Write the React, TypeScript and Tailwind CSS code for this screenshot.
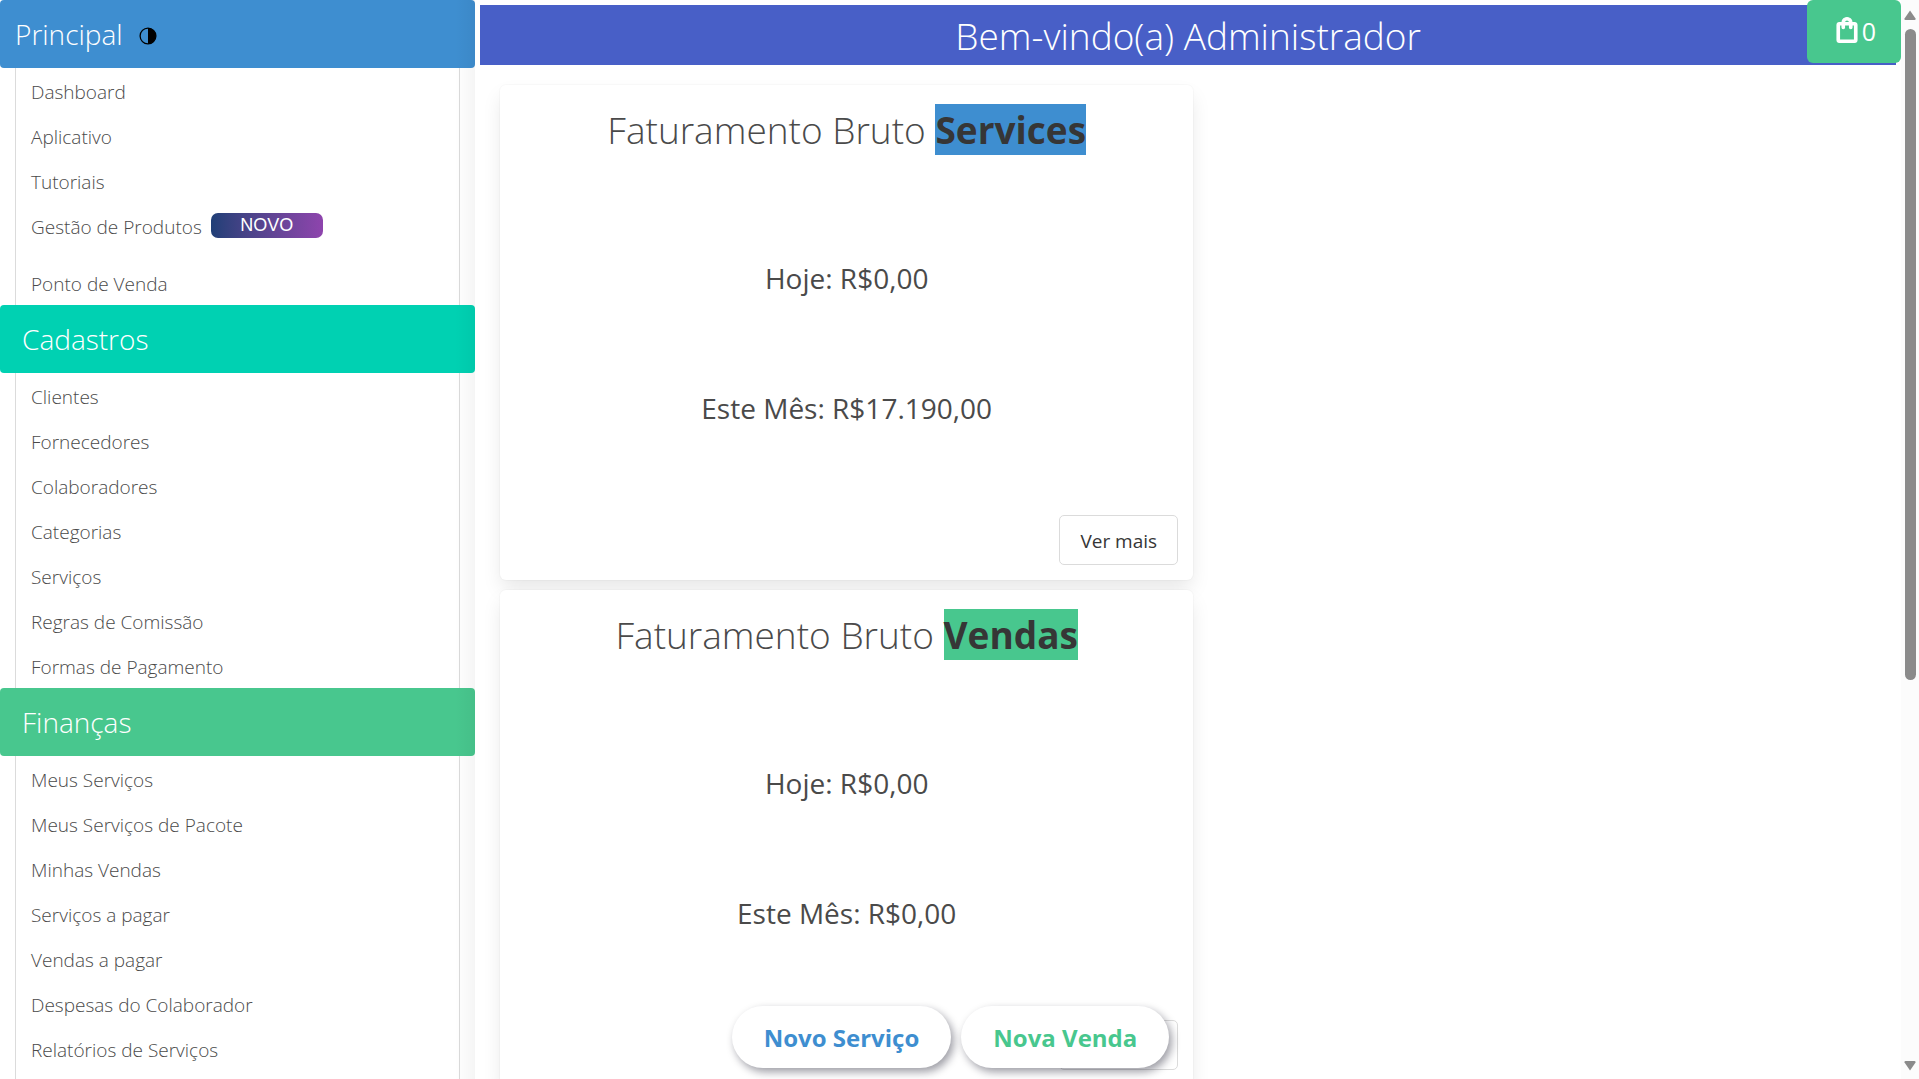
import { useState } from 'react';
import clsx from 'clsx';

interface MenuItem {
  label: string;
  isNew?: boolean;
}

interface MenuSection {
  title: string;
  color: string;
  hasThemeToggle?: boolean;
  items: MenuItem[];
}

interface Revenue {
  name: string;
  highlight: string;
  today: string;
  month: string;
}

const sections: MenuSection[] = [
  {
    title: 'Principal',
    color: 'bg-[#3e8ed0]',
    hasThemeToggle: true,
    items: [
      { label: 'Dashboard' },
      { label: 'Aplicativo' },
      { label: 'Tutoriais' },
      { label: 'Gestão de Produtos', isNew: true },
      { label: 'Ponto de Venda' },
    ],
  },
  {
    title: 'Cadastros',
    color: 'bg-[#00d1b2]',
    items: [
      { label: 'Clientes' },
      { label: 'Fornecedores' },
      { label: 'Colaboradores' },
      { label: 'Categorias' },
      { label: 'Serviços' },
      { label: 'Regras de Comissão' },
      { label: 'Formas de Pagamento' },
    ],
  },
  {
    title: 'Finanças',
    color: 'bg-[#48c78e]',
    items: [
      { label: 'Meus Serviços' },
      { label: 'Meus Serviços de Pacote' },
      { label: 'Minhas Vendas' },
      { label: 'Serviços a pagar' },
      { label: 'Vendas a pagar' },
      { label: 'Despesas do Colaborador' },
      { label: 'Relatórios de Serviços' },
    ],
  },
];

const revenues: Revenue[] = [
  { name: 'Services', highlight: 'bg-[#3e8ed0]', today: 'R$0,00', month: 'R$17.190,00' },
  { name: 'Vendas', highlight: 'bg-[#48c78e]', today: 'R$0,00', month: 'R$0,00' },
];

function ContrastIcon() {
  return (
    <svg viewBox="0 0 18 18" className="size-[18px]" aria-hidden="true">
      <circle cx="9" cy="9" r="7.9" fill="none" stroke="#000" strokeWidth="1.3" />
      <path d="M9 1.100a7.9 7.9 0 0 1 0 15.800z" fill="#000" />
    </svg>
  );
}

function BagIcon() {
  return (
    <svg
      viewBox="0 0 24 24"
      className="mb-1 size-[30px]"
      fill="currentColor"
      stroke="currentColor"
      strokeWidth="0.9"
      aria-hidden="true"
    >
      <path d="M18 6h-2c0-2.21-1.79-4-4-4S8 3.79 8 6H6c-1.1 0-2 .9-2 2v12c0 1.1.9 2 2 2h12c1.1 0 2-.9 2-2V8c0-1.1-.9-2-2-2zm-6-2c1.1 0 2 .9 2 2h-4c0-1.1.9-2 2-2zm6 16H6V8h2v2c0 .55.45 1 1 1s1-.45 1-1V8h4v2c0 .55.45 1 1 1s1-.45 1-1V8h2v12z" />
    </svg>
  );
}

function Sidebar({ onToggleTheme }: { onToggleTheme: () => void }) {
  return (
    <aside className="relative w-1/4 shrink-0 overflow-hidden">
      {sections.map((section) => (
        <section key={section.title} className="group">
          <div
            className={clsx(
              'flex h-[68px] items-center gap-4 rounded text-white',
              section.color,
              section.hasThemeToggle ? 'px-[15px]' : 'px-[22px]'
            )}
          >
            <h2 className="text-[28px] font-light">{section.title}</h2>
            {section.hasThemeToggle && (
              <button type="button" onClick={onToggleTheme} aria-label="Alternar tema" className="pt-1">
                <ContrastIcon />
              </button>
            )}
          </div>
          <ul className="mx-[15px] border-x border-[#dbdbdb] group-last-of-type:pb-5">
            {section.items.map((item) => (
              <li
                key={item.label}
                className={clsx('flex items-start px-[15px] pt-[10px]', item.isNew ? 'pb-[18px]' : 'pb-[6px]')}
              >
                <a href="#" className="text-[19px] leading-[29px] font-light">
                  {item.label}
                </a>
                {item.isNew && (
                  <span className="ml-[9px] w-28 rounded-[7px] bg-linear-to-r from-[#1f3f77] to-[#8e44ad] text-center font-['Liberation_Sans',sans-serif] text-lg leading-[25px] text-white">
                    NOVO
                  </span>
                )}
              </li>
            ))}
          </ul>
        </section>
      ))}
      <div className="pointer-events-none absolute inset-y-0 right-0 w-5 bg-linear-to-r from-transparent to-black/4" />
    </aside>
  );
}

function RevenueCard({ revenue }: { revenue: Revenue }) {
  return (
    <article className="rounded-md bg-white p-[15px] text-center shadow-[0_10px_20px_-2px_rgba(10,10,10,0.1),0_0_0_1px_rgba(10,10,10,0.02)]">
      <h2 className="text-[37px] leading-[60px] font-light">
        Faturamento Bruto{' '}
        <strong className={clsx('font-bold text-[#363636]', revenue.highlight)}>{revenue.name}</strong>
      </h2>
      <p className="pt-[96px] text-[28px] leading-[45px]">Hoje: {revenue.today}</p>
      <p className="pt-[85px] text-[28px] leading-[45px]">Este Mês: {revenue.month}</p>
      <div className="flex justify-end pt-[84px]">
        <button type="button" className="h-[50px] rounded-[5px] border border-[#dbdbdb] px-5 pt-0.5 text-[19px] text-[#363636]">
          Ver mais
        </button>
      </div>
    </article>
  );
}

function ScrollBar() {
  return (
    <div className="flex w-[18px] shrink-0 flex-col items-center bg-[#fcfcfc] pt-[10px] pb-2" aria-hidden="true">
      <svg viewBox="0 0 12 10" className="h-[10px] w-3" fill="#8b8b8b">
        <path d="M6 0.500 11.500 8.500Q12 10 10.500 10h-9Q0 10 .5 8.500z" />
      </svg>
      <div className="mt-[9px] h-[61.4%] w-[11px] rounded-full bg-[#8b8b8b]" />
      <svg viewBox="0 0 12 10" className="mt-auto h-[10px] w-3" fill="#8b8b8b">
        <path d="M6 9.500.5 1.500Q0 0 1.500 0h9Q12 0 11.500 1.500z" />
      </svg>
    </div>
  );
}

export default function App() {
  const [dark, setDark] = useState(false);

  return (
    <div
      className={clsx(
        "flex h-screen overflow-hidden font-['Open_Sans',sans-serif] text-[#4a4a4a]",
        dark ? 'bg-neutral-300' : 'bg-white'
      )}
    >
      <div className="relative flex min-w-0 flex-1">
        <Sidebar onToggleTheme={() => setDark(!dark)} />

        <main className="min-w-0 flex-1 p-[5px]">
          <h1 className="bg-[#485fc7] pt-0.5 text-center text-[37px] leading-[58px] font-light text-white">
            Bem-vindo(a) Administrador
          </h1>
          <div className="grid w-[calc(50%+5px)] gap-[10px] pt-5 pl-5">
            {revenues.map((revenue) => (
              <RevenueCard key={revenue.name} revenue={revenue} />
            ))}
          </div>
        </main>

        <button
          type="button"
          aria-label="Carrinho"
          className="absolute top-0 right-0 flex h-[63px] items-center rounded-md bg-[#48c78e] px-[25px] text-[25px] text-white"
        >
          <BagIcon />0
        </button>

        <div className="absolute inset-x-0 bottom-[11px] flex justify-center gap-[10px] text-2xl font-bold">
          <button type="button" className="h-[62px] rounded-full bg-white px-8 pt-0.5 text-[#3e8ed0] shadow-[3px_4px_8px_rgba(10,10,30,0.4)]">
            Novo Serviço
          </button>
          <button type="button" className="h-[62px] rounded-full bg-white px-8 pt-0.5 text-[#48c78e] shadow-[3px_4px_8px_rgba(10,10,30,0.4)]">
            Nova Venda
          </button>
        </div>
      </div>
      <ScrollBar />
    </div>
  );
}
